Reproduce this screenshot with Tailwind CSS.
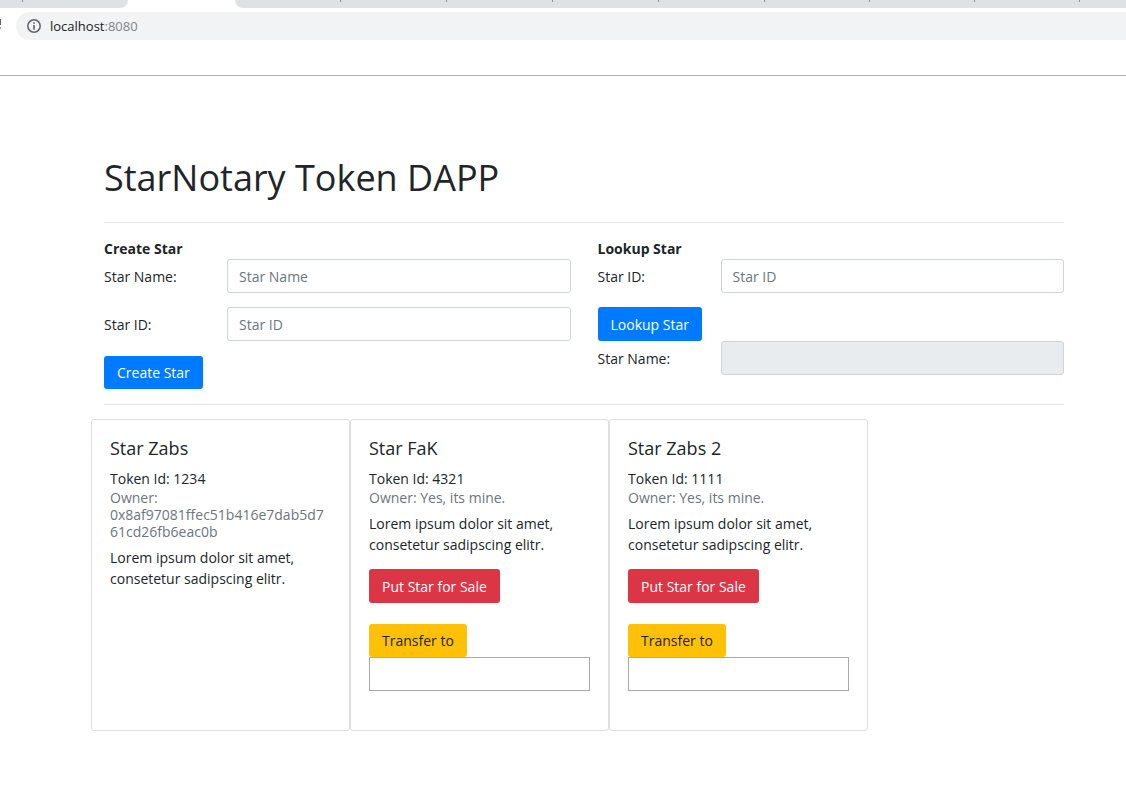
<!DOCTYPE html>
<html lang="en">
<head>
<meta charset="utf-8">
<title>StarNotary Token DAPP</title>
<script src="https://cdn.jsdelivr.net/npm/@tailwindcss/browser@4"></script>
</head>
<body class="bg-white font-['Open_Sans',sans-serif] text-sm/[21px] text-[#212529]">
<header class="h-19 overflow-hidden border-b border-[#b2b2b2]">
  <div class="flex h-2 overflow-hidden">
    <div class="w-32 shrink-0 rounded-br-lg bg-[#dee1e6]"><div class="h-[2px] w-[23px] border-r border-[#8d9095]"></div></div>
    <div class="w-[107px] shrink-0"></div>
    <div class="flex min-w-0 flex-1 overflow-hidden rounded-bl-lg bg-[#dee1e6]">
      <div class="h-[2px] w-[106px] shrink-0 border-r border-[#8d9095]"></div>
      <div class="h-[2px] w-[106px] shrink-0 border-r border-[#8d9095]"></div>
      <div class="h-[2px] w-[106px] shrink-0 border-r border-[#8d9095]"></div>
      <div class="h-[2px] w-[106px] shrink-0 border-r border-[#8d9095]"></div>
      <div class="h-[2px] w-[106px] shrink-0 border-r border-[#8d9095]"></div>
      <div class="h-[2px] w-[105px] shrink-0 border-r border-[#8d9095]"></div>
      <div class="h-[2px] w-[105px] shrink-0 border-r border-[#8d9095]"></div>
      <div class="h-[2px] w-[105px] shrink-0 border-r border-[#8d9095]"></div>
    </div>
  </div>
  <div class="mt-1 flex h-7 items-center">
    <svg class="h-7 w-4 shrink-0" viewBox="0 0 16 28" aria-hidden="true"><path d="M0 7h1v6H0z" fill="#5f6368"/><path d="M0 15h1v2H0z" fill="#a0a3a7"/></svg>
    <div class="flex h-7 flex-1 items-center gap-[9px] rounded-l-full bg-[#f1f3f4] pl-[11px]">
      <svg class="size-[14px]" viewBox="0 0 14 14" aria-hidden="true"><circle cx="7" cy="7" r="6.2" fill="none" stroke="#5f6368" stroke-width="1.5"/><path d="M6.2 3.2h1.6v1.6H6.2zM6.2 6h1.6v4.8H6.2z" fill="#5f6368"/></svg>
      <span class="text-[13px]/5 text-[#80868b]"><span class="text-[#202124]">localhost</span>:8080</span>
    </div>
  </div>
</header>

<main class="pt-[81px] pr-[62px] pb-18 pl-[104px]">
  <h1 class="text-4xl/[42px]">StarNotary Token DAPP</h1>
  <hr class="mt-[23px] mb-[15px] border-[#e5e5e5]">
  <div class="grid grid-cols-2 gap-x-[27px]">
    <form>
      <h2 class="font-bold">Create Star</h2>
      <div class="grid grid-cols-[123px_1fr] items-center gap-y-[14px]">
        <label for="name">Star Name:</label>
        <input id="name" type="text" placeholder="Star Name" class="h-[34px] w-full min-w-0 rounded-[3px] border border-[#ced4da] px-[11px] placeholder:text-[#6c757d]">
        <label for="id">Star ID:</label>
        <input id="id" type="text" placeholder="Star ID" class="h-[34px] w-full min-w-0 rounded-[3px] border border-[#ced4da] px-[11px] placeholder:text-[#6c757d]">
      </div>
      <button type="button" class="mt-[15px] block h-[33px] rounded-[3px] bg-[#007bff] px-[13px] text-white">Create Star</button>
    </form>
    <form>
      <h2 class="font-bold">Lookup Star</h2>
      <div class="grid grid-cols-[123px_1fr] items-center">
        <label for="lookup">Star ID:</label>
        <input id="lookup" type="text" placeholder="Star ID" class="h-[34px] w-full min-w-0 rounded-[3px] border border-[#ced4da] px-[11px] placeholder:text-[#6c757d]">
      </div>
      <button type="button" class="mt-[14px] block h-[34px] rounded-[3px] bg-[#007bff] px-[13px] text-white">Lookup Star</button>
      <div class="grid grid-cols-[123px_1fr] items-center">
        <label for="found">Star Name:</label>
        <input id="found" type="text" disabled class="h-[34px] w-full min-w-0 rounded-[3px] border border-[#ced4da] bg-[#e9ecef] px-[11px]">
      </div>
    </form>
  </div>
  <hr class="mt-[15px] mb-[14px] border-[#e5e5e5]">
  <section class="-ml-[13px] flex flex-wrap">
    <article class="w-[259px] rounded-[3px] border border-[#dfdfdf] px-[18px] pt-[18px] pb-[39px]">
      <h3 class="mb-[9px] text-lg/[21px]">Star Zabs</h3>
      <p>Token Id: 1234</p>
      <p class="mb-[7px] leading-[17px] break-words text-[#6c757d]">Owner: 0x8af97081ffec51b416e7dab5d761cd26fb6eac0b</p>
      <p>Lorem ipsum dolor sit amet, consetetur sadipscing elitr.</p>
    </article>
    <article class="w-[259px] rounded-[3px] border border-[#dfdfdf] px-[18px] pt-[18px] pb-[39px]">
      <h3 class="mb-[9px] text-lg/[21px]">Star FaK</h3>
      <p>Token Id: 4321</p>
      <p class="mb-[7px] leading-[17px] text-[#6c757d]">Owner: Yes, its mine.</p>
      <p>Lorem ipsum dolor sit amet, consetetur sadipscing elitr.</p>
      <button type="button" class="mt-[14px] mb-[21px] block h-[34px] rounded-[3px] bg-[#dc3545] px-[13px] text-white">Put Star for Sale</button>
      <button type="button" class="block h-[33px] rounded-[3px] bg-[#ffc107] px-[13px]">Transfer to</button>
      <input type="text" aria-label="Transfer Star FaK to" class="block h-[34px] w-full border border-[#a9a9a9] px-[11px]">
    </article>
    <article class="w-[259px] rounded-[3px] border border-[#dfdfdf] px-[18px] pt-[18px] pb-[39px]">
      <h3 class="mb-[9px] text-lg/[21px]">Star Zabs 2</h3>
      <p>Token Id: 1111</p>
      <p class="mb-[7px] leading-[17px] text-[#6c757d]">Owner: Yes, its mine.</p>
      <p>Lorem ipsum dolor sit amet, consetetur sadipscing elitr.</p>
      <button type="button" class="mt-[14px] mb-[21px] block h-[34px] rounded-[3px] bg-[#dc3545] px-[13px] text-white">Put Star for Sale</button>
      <button type="button" class="block h-[33px] rounded-[3px] bg-[#ffc107] px-[13px]">Transfer to</button>
      <input type="text" aria-label="Transfer Star Zabs 2 to" class="block h-[34px] w-full border border-[#a9a9a9] px-[11px]">
    </article>
  </section>
</main>
</body>
</html>
